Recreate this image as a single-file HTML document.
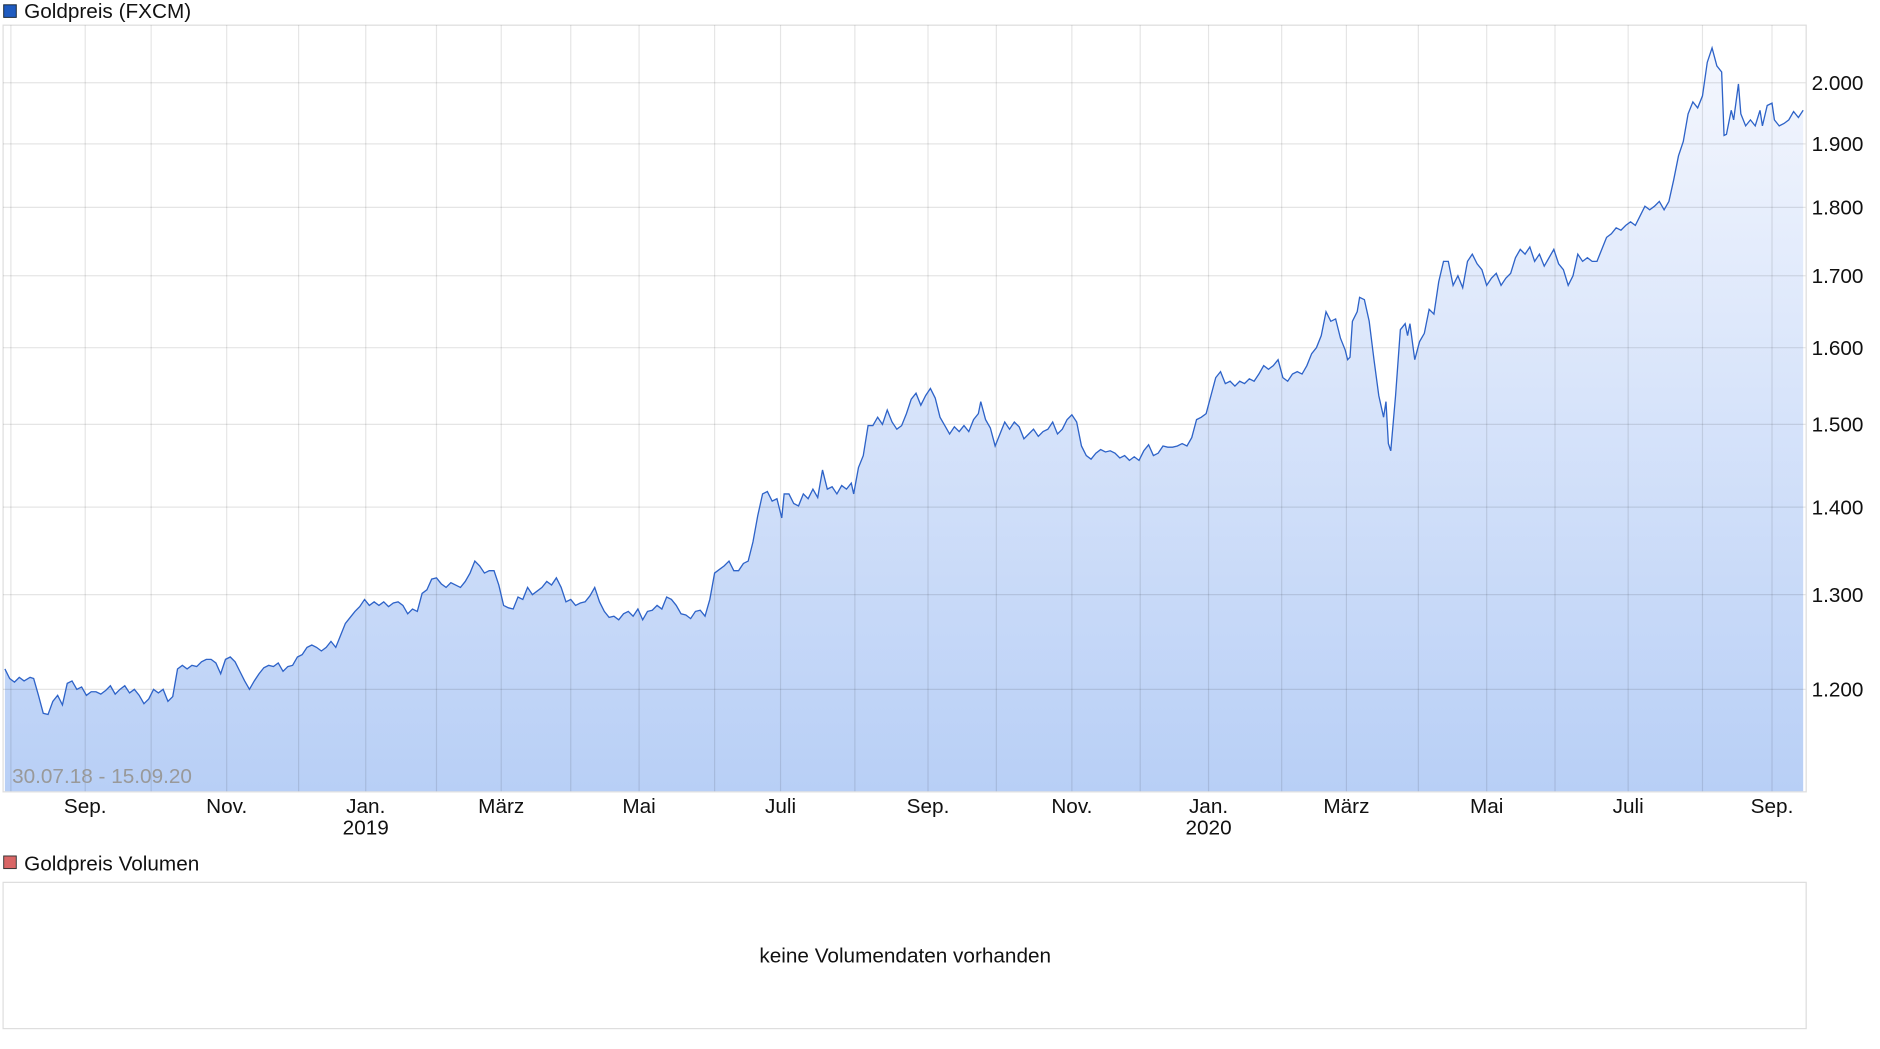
<!DOCTYPE html>
<html><head><meta charset="utf-8"><style>
html,body{margin:0;padding:0;background:#fff;overflow:hidden}
svg{display:block}
text{font-family:"Liberation Sans",sans-serif;fill:#111}
</style></head><body>
<svg width="1880" height="1049" viewBox="0 0 1568 875" xmlns="http://www.w3.org/2000/svg">
<defs>
<linearGradient id="g" gradientUnits="userSpaceOnUse" x1="0" y1="21" x2="0" y2="660">
<stop offset="0" stop-color="#f6f8fe"/>
<stop offset="1" stop-color="#b8cff6"/>
</linearGradient>
</defs>
<rect x="3" y="4" width="10.5" height="10.5" fill="#1f5bc0" stroke="#123" stroke-width="0.8"/>
<text x="20" y="15" font-size="17.3">Goldpreis (FXCM)</text>
<rect x="2.5" y="21" width="1504" height="639.5" fill="#fff" stroke="#ddd" stroke-width="1"/>
<polygon fill="url(#g)" points="4,660 4,558 8,566 12,569 16,565 20,568 25,565 28,566 32,580 36,595 40,596 44,585 48,580 52,588 56,570 60,568 64,575 68,573 72,580 76,577 80,577 84,579 88,576 92,572 96,579 100,575 104,572 108,578 112,575 116,580 120,587 124,583 128,575 132,578 136,575 140,585 144,581 148,558 152,555 156,558 160,555 164,556 168,552 172,550 176,550 180,553 184,562 188,550 192,548 196,552 200,560 204,568 208,575 212,568 216,562 220,557 224,555 228,556 232,553 236,560 240,556 244,555 248,548 252,546 256,540 260,538 264,540 268,543 272,540 276,535 280,540 284,530 288,520 292,515 296,510 300,506 304,500 308,505 312,502 316,505 320,502 324,506 328,503 332,502 336,505 340,512 344,508 348,510 352,495 356,492 360,483 364,482 368,487 372,490 376,486 380,488 384,490 388,485 392,478 396,468 400,472 404,478 408,476 412,476 416,488 420,505 424,507 428,508 432,498 436,500 440,490 444,496 448,493 452,490 456,485 460,488 464,482 468,490 472,502 476,500 480,505 484,503 488,502 492,497 496,490 500,502 504,510 508,515 512,514 516,517 520,512 524,510 528,514 532,508 536,517 540,510 544,509 548,505 552,508 556,498 560,500 564,505 568,512 572,513 576,516 580,510 584,509 588,514 592,500 596,478 600,475 604,472 608,468 612,476 616,476 620,470 624,468 628,452 632,430 636,412 640,410 644,418 648,416 652,432 654,412 658,412 662,420 666,422 670,412 674,416 678,408 682,415 686,392 690,408 694,406 698,412 702,405 706,408 710,403 712,412 716,390 720,380 724,355 728,355 732,348 736,354 740,342 744,352 748,358 752,355 756,345 760,333 764,328 768,338 772,330 776,324 780,332 784,348 788,355 792,362 796,356 800,360 804,355 808,360 812,350 816,345 818,335 822,350 826,357 830,372 834,362 838,352 842,358 846,352 850,356 854,366 858,362 862,358 866,364 870,360 874,358 878,352 882,362 886,358 890,350 894,346 898,352 902,372 906,380 910,383 914,378 918,375 922,377 926,376 930,378 934,382 938,380 942,384 946,381 950,384 954,376 958,371 962,380 966,378 970,372 974,373 978,373 982,372 986,370 990,372 994,365 998,350 1002,348 1006,345 1010,330 1014,315 1018,310 1022,320 1026,318 1030,322 1034,318 1038,320 1042,316 1046,318 1050,312 1054,305 1058,308 1062,305 1066,300 1070,315 1074,318 1078,312 1082,310 1086,312 1090,305 1094,295 1098,290 1102,280 1106,260 1110,268 1114,266 1118,282 1122,292 1124,300 1126,298 1128,268 1132,260 1134,248 1138,250 1142,268 1146,300 1150,330 1154,348 1156,335 1158,370 1160,376 1164,330 1168,275 1172,270 1174,280 1176,270 1180,300 1184,285 1188,278 1192,258 1196,262 1200,235 1204,218 1208,218 1212,238 1216,230 1220,240 1224,218 1228,212 1232,220 1236,225 1240,238 1244,232 1248,228 1252,238 1256,232 1260,228 1264,215 1268,208 1272,212 1276,206 1280,218 1284,212 1288,222 1292,215 1296,208 1300,220 1304,225 1308,238 1312,230 1316,212 1320,218 1324,215 1328,218 1332,218 1336,208 1340,198 1344,195 1348,190 1352,192 1356,188 1360,185 1364,188 1368,180 1372,172 1376,175 1380,172 1384,168 1388,175 1392,168 1396,150 1400,130 1404,118 1408,95 1412,85 1416,90 1420,80 1424,52 1428,40 1432,55 1436,60 1438,113 1440,112 1444,92 1446,100 1450,70 1452,95 1456,105 1460,100 1464,105 1468,92 1470,105 1474,88 1478,86 1480,100 1484,105 1488,103 1492,100 1496,93 1500,98 1504,92 1504,660"/>
<g stroke="#000" stroke-opacity="0.1" stroke-width="1">
<line x1="2.5" y1="69" x2="1506" y2="69"/><line x1="2.5" y1="120" x2="1506" y2="120"/><line x1="2.5" y1="173" x2="1506" y2="173"/><line x1="2.5" y1="230" x2="1506" y2="230"/><line x1="2.5" y1="290" x2="1506" y2="290"/><line x1="2.5" y1="354" x2="1506" y2="354"/><line x1="2.5" y1="423" x2="1506" y2="423"/><line x1="2.5" y1="496" x2="1506" y2="496"/><line x1="2.5" y1="575" x2="1506" y2="575"/>
<line x1="9" y1="21" x2="9" y2="660"/><line x1="71" y1="21" x2="71" y2="660"/><line x1="126" y1="21" x2="126" y2="660"/><line x1="189" y1="21" x2="189" y2="660"/><line x1="249" y1="21" x2="249" y2="660"/><line x1="305" y1="21" x2="305" y2="660"/><line x1="364" y1="21" x2="364" y2="660"/><line x1="418" y1="21" x2="418" y2="660"/><line x1="476" y1="21" x2="476" y2="660"/><line x1="533" y1="21" x2="533" y2="660"/><line x1="596" y1="21" x2="596" y2="660"/><line x1="651" y1="21" x2="651" y2="660"/><line x1="713" y1="21" x2="713" y2="660"/><line x1="774" y1="21" x2="774" y2="660"/><line x1="831" y1="21" x2="831" y2="660"/><line x1="894" y1="21" x2="894" y2="660"/><line x1="951" y1="21" x2="951" y2="660"/><line x1="1008" y1="21" x2="1008" y2="660"/><line x1="1069" y1="21" x2="1069" y2="660"/><line x1="1123" y1="21" x2="1123" y2="660"/><line x1="1183" y1="21" x2="1183" y2="660"/><line x1="1240" y1="21" x2="1240" y2="660"/><line x1="1297" y1="21" x2="1297" y2="660"/><line x1="1358" y1="21" x2="1358" y2="660"/><line x1="1420" y1="21" x2="1420" y2="660"/><line x1="1478" y1="21" x2="1478" y2="660"/>
</g>
<polyline fill="none" stroke="#2e63c8" stroke-width="1.1" points="4,558 8,566 12,569 16,565 20,568 25,565 28,566 32,580 36,595 40,596 44,585 48,580 52,588 56,570 60,568 64,575 68,573 72,580 76,577 80,577 84,579 88,576 92,572 96,579 100,575 104,572 108,578 112,575 116,580 120,587 124,583 128,575 132,578 136,575 140,585 144,581 148,558 152,555 156,558 160,555 164,556 168,552 172,550 176,550 180,553 184,562 188,550 192,548 196,552 200,560 204,568 208,575 212,568 216,562 220,557 224,555 228,556 232,553 236,560 240,556 244,555 248,548 252,546 256,540 260,538 264,540 268,543 272,540 276,535 280,540 284,530 288,520 292,515 296,510 300,506 304,500 308,505 312,502 316,505 320,502 324,506 328,503 332,502 336,505 340,512 344,508 348,510 352,495 356,492 360,483 364,482 368,487 372,490 376,486 380,488 384,490 388,485 392,478 396,468 400,472 404,478 408,476 412,476 416,488 420,505 424,507 428,508 432,498 436,500 440,490 444,496 448,493 452,490 456,485 460,488 464,482 468,490 472,502 476,500 480,505 484,503 488,502 492,497 496,490 500,502 504,510 508,515 512,514 516,517 520,512 524,510 528,514 532,508 536,517 540,510 544,509 548,505 552,508 556,498 560,500 564,505 568,512 572,513 576,516 580,510 584,509 588,514 592,500 596,478 600,475 604,472 608,468 612,476 616,476 620,470 624,468 628,452 632,430 636,412 640,410 644,418 648,416 652,432 654,412 658,412 662,420 666,422 670,412 674,416 678,408 682,415 686,392 690,408 694,406 698,412 702,405 706,408 710,403 712,412 716,390 720,380 724,355 728,355 732,348 736,354 740,342 744,352 748,358 752,355 756,345 760,333 764,328 768,338 772,330 776,324 780,332 784,348 788,355 792,362 796,356 800,360 804,355 808,360 812,350 816,345 818,335 822,350 826,357 830,372 834,362 838,352 842,358 846,352 850,356 854,366 858,362 862,358 866,364 870,360 874,358 878,352 882,362 886,358 890,350 894,346 898,352 902,372 906,380 910,383 914,378 918,375 922,377 926,376 930,378 934,382 938,380 942,384 946,381 950,384 954,376 958,371 962,380 966,378 970,372 974,373 978,373 982,372 986,370 990,372 994,365 998,350 1002,348 1006,345 1010,330 1014,315 1018,310 1022,320 1026,318 1030,322 1034,318 1038,320 1042,316 1046,318 1050,312 1054,305 1058,308 1062,305 1066,300 1070,315 1074,318 1078,312 1082,310 1086,312 1090,305 1094,295 1098,290 1102,280 1106,260 1110,268 1114,266 1118,282 1122,292 1124,300 1126,298 1128,268 1132,260 1134,248 1138,250 1142,268 1146,300 1150,330 1154,348 1156,335 1158,370 1160,376 1164,330 1168,275 1172,270 1174,280 1176,270 1180,300 1184,285 1188,278 1192,258 1196,262 1200,235 1204,218 1208,218 1212,238 1216,230 1220,240 1224,218 1228,212 1232,220 1236,225 1240,238 1244,232 1248,228 1252,238 1256,232 1260,228 1264,215 1268,208 1272,212 1276,206 1280,218 1284,212 1288,222 1292,215 1296,208 1300,220 1304,225 1308,238 1312,230 1316,212 1320,218 1324,215 1328,218 1332,218 1336,208 1340,198 1344,195 1348,190 1352,192 1356,188 1360,185 1364,188 1368,180 1372,172 1376,175 1380,172 1384,168 1388,175 1392,168 1396,150 1400,130 1404,118 1408,95 1412,85 1416,90 1420,80 1424,52 1428,40 1432,55 1436,60 1438,113 1440,112 1444,92 1446,100 1450,70 1452,95 1456,105 1460,100 1464,105 1468,92 1470,105 1474,88 1478,86 1480,100 1484,105 1488,103 1492,100 1496,93 1500,98 1504,92"/>
<text x="10" y="653" font-size="17.3" style="fill:#999">30.07.18 - 15.09.20</text>
<g font-size="17.3">
<text x="1511" y="75">2.000</text><text x="1511" y="126">1.900</text><text x="1511" y="179">1.800</text><text x="1511" y="236">1.700</text><text x="1511" y="296">1.600</text><text x="1511" y="360">1.500</text><text x="1511" y="429">1.400</text><text x="1511" y="502">1.300</text><text x="1511" y="581">1.200</text>
</g>
<g font-size="17.3" text-anchor="middle">
<text x="71" y="678">Sep.</text><text x="189" y="678">Nov.</text><text x="305" y="678">Jan.</text><text x="305" y="696">2019</text><text x="418" y="678">März</text><text x="533" y="678">Mai</text><text x="651" y="678">Juli</text><text x="774" y="678">Sep.</text><text x="894" y="678">Nov.</text><text x="1008" y="678">Jan.</text><text x="1008" y="696">2020</text><text x="1123" y="678">März</text><text x="1240" y="678">Mai</text><text x="1358" y="678">Juli</text><text x="1478" y="678">Sep.</text>
</g>
<rect x="3" y="714" width="10.5" height="10.5" fill="#d96666" stroke="#333" stroke-width="0.8"/>
<text x="20" y="726" font-size="17.3">Goldpreis Volumen</text>
<rect x="2.5" y="736" width="1504" height="122" fill="#fff" stroke="#ddd" stroke-width="1"/>
<text x="755" y="803" font-size="17.3" text-anchor="middle">keine Volumendaten vorhanden</text>
</svg>
</body></html>
